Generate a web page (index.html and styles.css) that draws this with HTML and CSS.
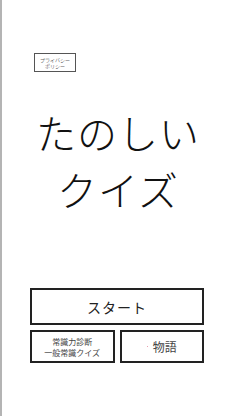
FILE: index.html
```html
<!DOCTYPE html>
<html lang="ja">

<head>
    <meta charset="UTF-8">
    <meta name="viewport" content="width=device-width, initial-scale=1.0">
    <title>たのしいクイズ</title>
    <link rel="stylesheet" href="styles.css">
</head>

<body>
    <div id="app">
        <div class="privacy">プライバシー<br>ポリシー</div>

        <h1 class="title">たのしい<br>クイズ</h1>

        <div class="menu">
            <button class="btn btn-start">スタート</button>
            <div class="menu-row">
                <button class="btn btn-small">常識力診断<br>一般常識クイズ</button>
                <button class="btn btn-story"><span class="dot"></span>物語</button>
            </div>
        </div>
    </div>
</body>

</html>
```

FILE: styles.css
```css
* {
    padding: 0;
    margin: 0;
    box-sizing: border-box;
}

html,
body {
    height: 100%;
}

body {
    background: #fff;
    color: #111;
    font-family: "Noto Sans CJK JP", "Noto Sans", sans-serif;
}

#app {
    height: 100%;
    border-left: 2px solid #b4b4b4;
    display: flex;
    flex-direction: column;
}

.privacy {
    width: 42px;
    height: 19px;
    margin: 53px 0 0 32px;
    border: 1px solid #555;
    font-size: 5px;
    line-height: 6px;
    color: #666;
    text-align: center;
    display: flex;
    align-items: center;
    justify-content: center;
}

.title {
    margin-top: 32px;
    font-size: 40px;
    font-weight: 300;
    line-height: 57px;
    text-align: center;
    letter-spacing: 1px;
}

.menu {
    margin: 70px 0 0 28px;
    width: 174px;
    display: flex;
    flex-direction: column;
    gap: 5px;
}

.menu-row {
    display: flex;
    gap: 5px;
}

.btn {
    background: #fff;
    border: 2px solid #222;
    font-family: inherit;
    color: #222;
    display: flex;
    align-items: center;
    justify-content: center;
}

.btn-start {
    height: 37px;
    font-size: 14px;
    letter-spacing: 1px;
}

.btn-small,
.btn-story {
    height: 33px;
    flex: 1;
}

.btn-small {
    font-size: 8px;
    line-height: 11px;
    color: #444;
}

.btn-story {
    font-size: 12px;
    color: #444;
}

.dot {
    width: 1px;
    height: 1px;
    background: #e8a0b0;
    margin-right: 5px;
}
```
